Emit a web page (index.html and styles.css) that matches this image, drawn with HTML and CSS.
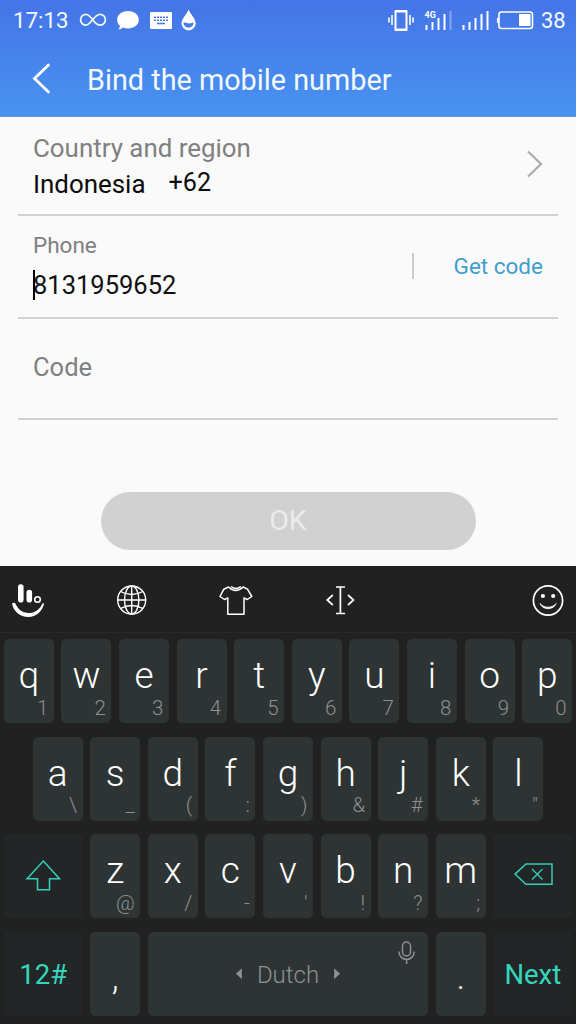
FILE: index.html
```
<!DOCTYPE html>
<html lang="en">
<head>
<meta charset="utf-8">
<title>Bind the mobile number</title>
<link rel="stylesheet" href="styles.css">
</head>
<body>
<header class="top">
  <div class="status">
    <span class="time">17:13</span>
    <svg class="status-left" width="118" height="26" viewBox="79 7 118 26">
      <path d="M93 20C90 16 88 14.300 86 14.300a5.200 5.200 0 0 0 0 10.800C91 25 94 14.300 100 14.300a5.200 5.200 0 0 1 0 10.800C97 25 95 23 93 20" fill="none" stroke="#eef8ff" stroke-width="1.800"/>
      <path d="M128 11c6.200 0 10.800 3.900 10.800 8.800s-4.600 8.800-10.800 8.800c-2 0-3.700-.3-5.100-1-1.300 1.300-2.700 1.900-4.700 1.900 1.100-1 1.700-2.200 1.700-3.700-1.800-1.500-2.700-3.600-2.700-6 0-4.900 4.600-8.800 10.800-8.800z" fill="#fff"/>
      <rect x="150" y="12" width="22" height="17" rx="1" fill="#fff"/>
      <path d="M154 17.300h14M154 20.300h14" stroke="#4a7be8" stroke-width="1.600" stroke-dasharray="2 1"/>
      <path d="M157 23.500h8" stroke="#4a7be8" stroke-width="1.600"/>
      <path d="M188.600 11c-2 4.500-6.500 8-6.500 12.300a6.500 6.500 0 0 0 13 0c0-4.300-4.500-7.800-6.500-12.300z" fill="#fff" stroke="#fff" stroke-width="1.200"/>
      <path d="M183.500 22.800c2.500-1.200 4 .7 6 .7 1.500 0 2.600-.7 4.100-.7a5 5 0 0 1-10.100 0z" fill="#4a7be8"/>
    </svg>
    <svg class="status-right" width="148" height="26" viewBox="387 7 148 26">
      <rect x="395.500" y="11.500" width="11" height="18" fill="none" stroke="#fff" stroke-width="2"/>
      <path d="M395 11h12M395 30h12" stroke="#fff" stroke-width="2"/>
      <path d="M392 15v10M389 17.500v5M410 15v10M413 17.500v5" stroke="#fff" stroke-width="1.600"/>
      <text x="424.500" y="17.500" class="net">4G</text>
      <path d="M426.500 25v5M432.500 22v8M438.500 18v12M444.500 14v16M463.500 25v5M469.500 22v8M475.500 18v12M481.500 14v16M487.500 11v19" stroke="#fff" stroke-width="2"/>
      <path d="M450.500 11v19" stroke="#fff" stroke-opacity=".35" stroke-width="2"/>
      <rect x="499" y="12" width="33.500" height="16.500" rx="2.500" fill="none" stroke="#fff" stroke-width="1.600"/>
      <path d="M497.700 18v5" stroke="#fff" stroke-width="1.600"/>
      <rect x="519" y="14" width="11.500" height="12" fill="#fff"/>
    </svg>
    <span class="level">38</span>
  </div>
  <div class="bar">
    <svg class="back" width="24" height="36" viewBox="30 60 24 36"><path d="M48.500 65L34.500 78.500 48.500 92" fill="none" stroke="#fff" stroke-width="2.800" stroke-linecap="round"/></svg>
    <h1 class="title">Bind the mobile number</h1>
  </div>
</header>

<main class="form">
  <section class="field country">
    <div>
      <div class="label label-country">Country and region</div>
      <div class="country-value"><span class="name">Indonesia</span><span class="prefix">+62</span></div>
    </div>
    <svg class="chevron" width="18" height="30" viewBox="526 149 18 30"><path d="M528 151.500L541 164 528 176.500" fill="none" stroke="#aaa" stroke-width="2.200"/></svg>
  </section>
  <section class="field phone">
    <div>
      <div class="label label-phone">Phone</div>
      <div class="number"><i class="caret"></i>8131959652</div>
    </div>
    <div class="get"><i class="divider"></i><span class="get-code">Get code</span></div>
  </section>
  <section class="field code"><div class="label label-code">Code</div></section>
  <button class="ok"><span class="ok-text">OK</span></button>
</main>

<section class="keyboard">
  <div class="tools">
    <svg width="40" height="40" viewBox="8 580 40 40">
      <path d="M20.800 587v12.800M29.300 592.500v7.300" stroke="#fff" stroke-width="5.600" stroke-linecap="round"/>
      <circle cx="37.500" cy="599.500" r="2.800" fill="none" stroke="#fff" stroke-width="1.600"/>
      <path d="M12 603.500c1.500-1 3-.8 3.500.3C18 609.500 22.500 613 28.500 613c6.500 0 11.500-3.500 14-9.800l1.600.3C42 611.500 36.500 617 28.300 617 20 617 13.500 611.500 12 603.500z" fill="#fff"/>
    </svg>
    <svg width="40" height="40" viewBox="112 580 40 40" fill="none" stroke="#fff" stroke-width="1.400">
      <circle cx="131.700" cy="600" r="14"/><ellipse cx="131.700" cy="600" rx="7.200" ry="14"/>
      <path d="M131.700 586v28M117.700 600h28M120.500 591.500q11.200 6 22.400 0M120.500 608.500q11.200-6 22.400 0"/>
    </svg>
    <svg width="40" height="40" viewBox="216 580 40 40" fill="none" stroke="#fff" stroke-width="1.500" stroke-linejoin="round">
      <path d="M228.500 587q7.200 7 14.600 0l4.400 2.200 4.300 7.300-4.500 3-3.300-1.700v16.400h-16.200v-16.400l-3.300 1.700-4.500-3 3.800-7.300zM231 586.500q4.900 4 9.800 0"/>
    </svg>
    <svg width="40" height="40" viewBox="320 580 40 40" fill="none" stroke="#fff" stroke-width="1.700">
      <path d="M340.400 587v26.500M336 587h9M336 613.500h9M332.800 595l-5.500 5 5.500 5M348 595l5.500 5-5.500 5"/>
    </svg>
    <svg class="smile" width="40" height="40" viewBox="528 580 40 40">
      <circle cx="548" cy="600.500" r="14.600" fill="none" stroke="#fff" stroke-width="1.700"/>
      <circle cx="542.900" cy="596" r="2.100" fill="#fff"/><circle cx="553.200" cy="596" r="2.100" fill="#fff"/>
      <path d="M540 603.500c4.200 5 12 5 16.200 0-2.600 6.900-13.600 6.900-16.200 0z" fill="#fff" stroke="#fff" stroke-width=".8"/>
    </svg>
  </div>
  <div class="keys">
    <div class="row">
      <div class="key">q<small>1</small></div><div class="key">w<small>2</small></div><div class="key">e<small>3</small></div><div class="key">r<small>4</small></div><div class="key">t<small>5</small></div><div class="key">y<small>6</small></div><div class="key">u<small>7</small></div><div class="key">i<small>8</small></div><div class="key">o<small>9</small></div><div class="key">p<small>0</small></div>
    </div>
    <div class="row inset">
      <div class="key">a<small>\</small></div><div class="key">s<small>_</small></div><div class="key">d<small>(</small></div><div class="key">f<small>:</small></div><div class="key">g<small>)</small></div><div class="key">h<small>&amp;</small></div><div class="key">j<small>#</small></div><div class="key">k<small>*</small></div><div class="key">l<small>"</small></div>
    </div>
    <div class="row">
      <div class="key fn">
        <svg width="36" height="34" viewBox="26 858 36 34"><path d="M44.300 860L60.500 877.800H50.500v11H38.500v-11H28.100z" fill="none" stroke="#35d0b5" stroke-width="1.500"/></svg>
      </div>
      <div class="key">z<small>@</small></div><div class="key">x<small>/</small></div><div class="key">c<small>-</small></div><div class="key">v<small>'</small></div><div class="key">b<small>!</small></div><div class="key">n<small>?</small></div><div class="key">m<small>;</small></div>
      <div class="key fn">
        <svg width="40" height="26" viewBox="513 863.500 40 26" fill="none" stroke="#35d0b5"><path d="M526 864.500h26v20.300H526L515 874.600z" stroke-width="1.500"/><path d="M532 869.500l10.500 10.500M542.500 869.500L532 880" stroke-width="1.300"/></svg>
      </div>
    </div>
    <div class="row">
      <div class="key fn"><span class="sym">12#</span></div>
      <div class="key punct">,</div>
      <div class="key space">
        <i class="arrow prev"></i><span class="lang">Dutch</span><i class="arrow next"></i>
        <svg class="mic" width="20" height="26" viewBox="396 939 20 26" fill="none" stroke="#8d9191" stroke-width="1.500"><rect x="402.500" y="942" width="8" height="14" rx="4"/><path d="M399 951.500c0 10.500 15.200 10.500 15.200 0M406.600 959.500v4.500"/></svg>
      </div>
      <div class="key punct">.</div>
      <div class="key fn"><span class="enter">Next</span></div>
    </div>
  </div>
</section>
</body>
</html>
```
FILE: styles.css
```
* { box-sizing: border-box; }
body {
  margin: 0;
  width: 576px;
  height: 1024px;
  overflow: hidden;
  background: #fafafa;
  color: #111;
  font-family: Roboto, sans-serif;
}
svg { display: block; flex: none; }
.top {
  height: 117px;
  background: linear-gradient(#4574e7, #4893f0);
  border-bottom: 1px solid #6699d8;
  color: #f2faff;
}
.status {
  display: flex;
  align-items: center;
  height: 40px;
  padding: 0 10px 0 13px;
  font-size: 22.3px;
}
.time { width: 66px; }
.status-right { margin-left: auto; }
.level { width: 31px; padding-left: 6px; font-size: 22px; }
.net { font: 700 9px Roboto, sans-serif; fill: #fff; }
.bar { display: flex; align-items: center; height: 76px; padding-left: 30px; }
.title { margin: 4px 0 0 33px; font-size: 28.8px; font-weight: 400; line-height: 36px; white-space: nowrap; }
.form { display: flex; flex-direction: column; height: 449px; padding: 0 18px; }
.field {
  display: flex;
  justify-content: space-between;
  padding: 0 15px;
  border-bottom: 2px solid #d2d2d2;
  white-space: nowrap;
}
.country { height: 99px; padding-top: 14px; }
.label { color: #808080; }
.label-country { font-size: 25.9px; line-height: 34px; }
.country-value { display: flex; gap: 23px; font-size: 25.9px; line-height: 38px; color: #0c0c0c; }
.prefix { line-height: 36px; font-size: 25.2px; }
.chevron { margin-top: 18px; margin-right: -1px; }
.phone { height: 103px; padding-top: 14px; }
.label-phone { font-size: 22.5px; line-height: 30px; }
.number { position: relative; font-size: 25.5px; line-height: 50px; }
.caret { position: absolute; left: 0; top: 10px; width: 2px; height: 30px; background: #000; }
.get { display: flex; align-items: center; gap: 40px; height: 72px; font-size: 22.5px; color: #409fcb; }
.divider { width: 2px; height: 26px; background: #ccc; }
.code { height: 101px; align-items: center; padding-bottom: 3px; }
.label-code { font-size: 25.5px; }
.ok {
  align-self: center;
  width: 375px;
  height: 58px;
  margin-top: 72px;
  padding: 0 0 2px;
  border: 0;
  border-radius: 29px;
  background: #d1d1d1;
  color: #ececec;
  font: 28.5px Roboto, sans-serif;
}
.keyboard { height: 458px; background: #212121; }
.tools {
  display: flex;
  align-items: center;
  gap: 64px;
  height: 67px;
  padding: 1px 8px 0;
  border-bottom: 1px solid #292929;
}
.smile { margin-left: auto; }
.keys { display: flex; flex-direction: column; gap: 13.6px; padding: 6px 3.800px 0; }
.row { display: flex; gap: 7.600px; height: 84px; }
.inset { padding: 0 28.800px; }
.key {
  position: relative;
  flex: 0 0 50px;
  height: 84px;
  border-radius: 5px;
  background: #2e3434;
  color: #fff;
  font-size: 37px;
  font-weight: 300;
  line-height: 74px;
  text-align: center;
}
.key small {
  position: absolute;
  right: 5.5px;
  bottom: 2.5px;
  font-size: 20.5px;
  line-height: 26px;
  color: #8c9090;
}
.fn {
  display: flex;
  flex-basis: 78.800px;
  align-items: center;
  justify-content: center;
  background: #222627;
  color: #35d6bb;
  font-size: 27.5px;
  font-weight: 400;
  line-height: 36px;
}
.sym, .enter, .lang { padding-top: 3px; }
.punct { line-height: 90px; font-size: 36px; }
.space {
  display: flex;
  flex: 1;
  align-items: center;
  justify-content: center;
  gap: 15px;
  color: #8c9090;
  font-size: 24px;
  line-height: 36px;
}
.arrow { width: 6px; height: 11px; background: #8d9191; }
.prev { clip-path: polygon(100% 0, 0 50%, 100% 100%); }
.next { clip-path: polygon(0 0, 100% 50%, 0 100%); }
.mic { position: absolute; right: 12px; top: 7px; }
```
